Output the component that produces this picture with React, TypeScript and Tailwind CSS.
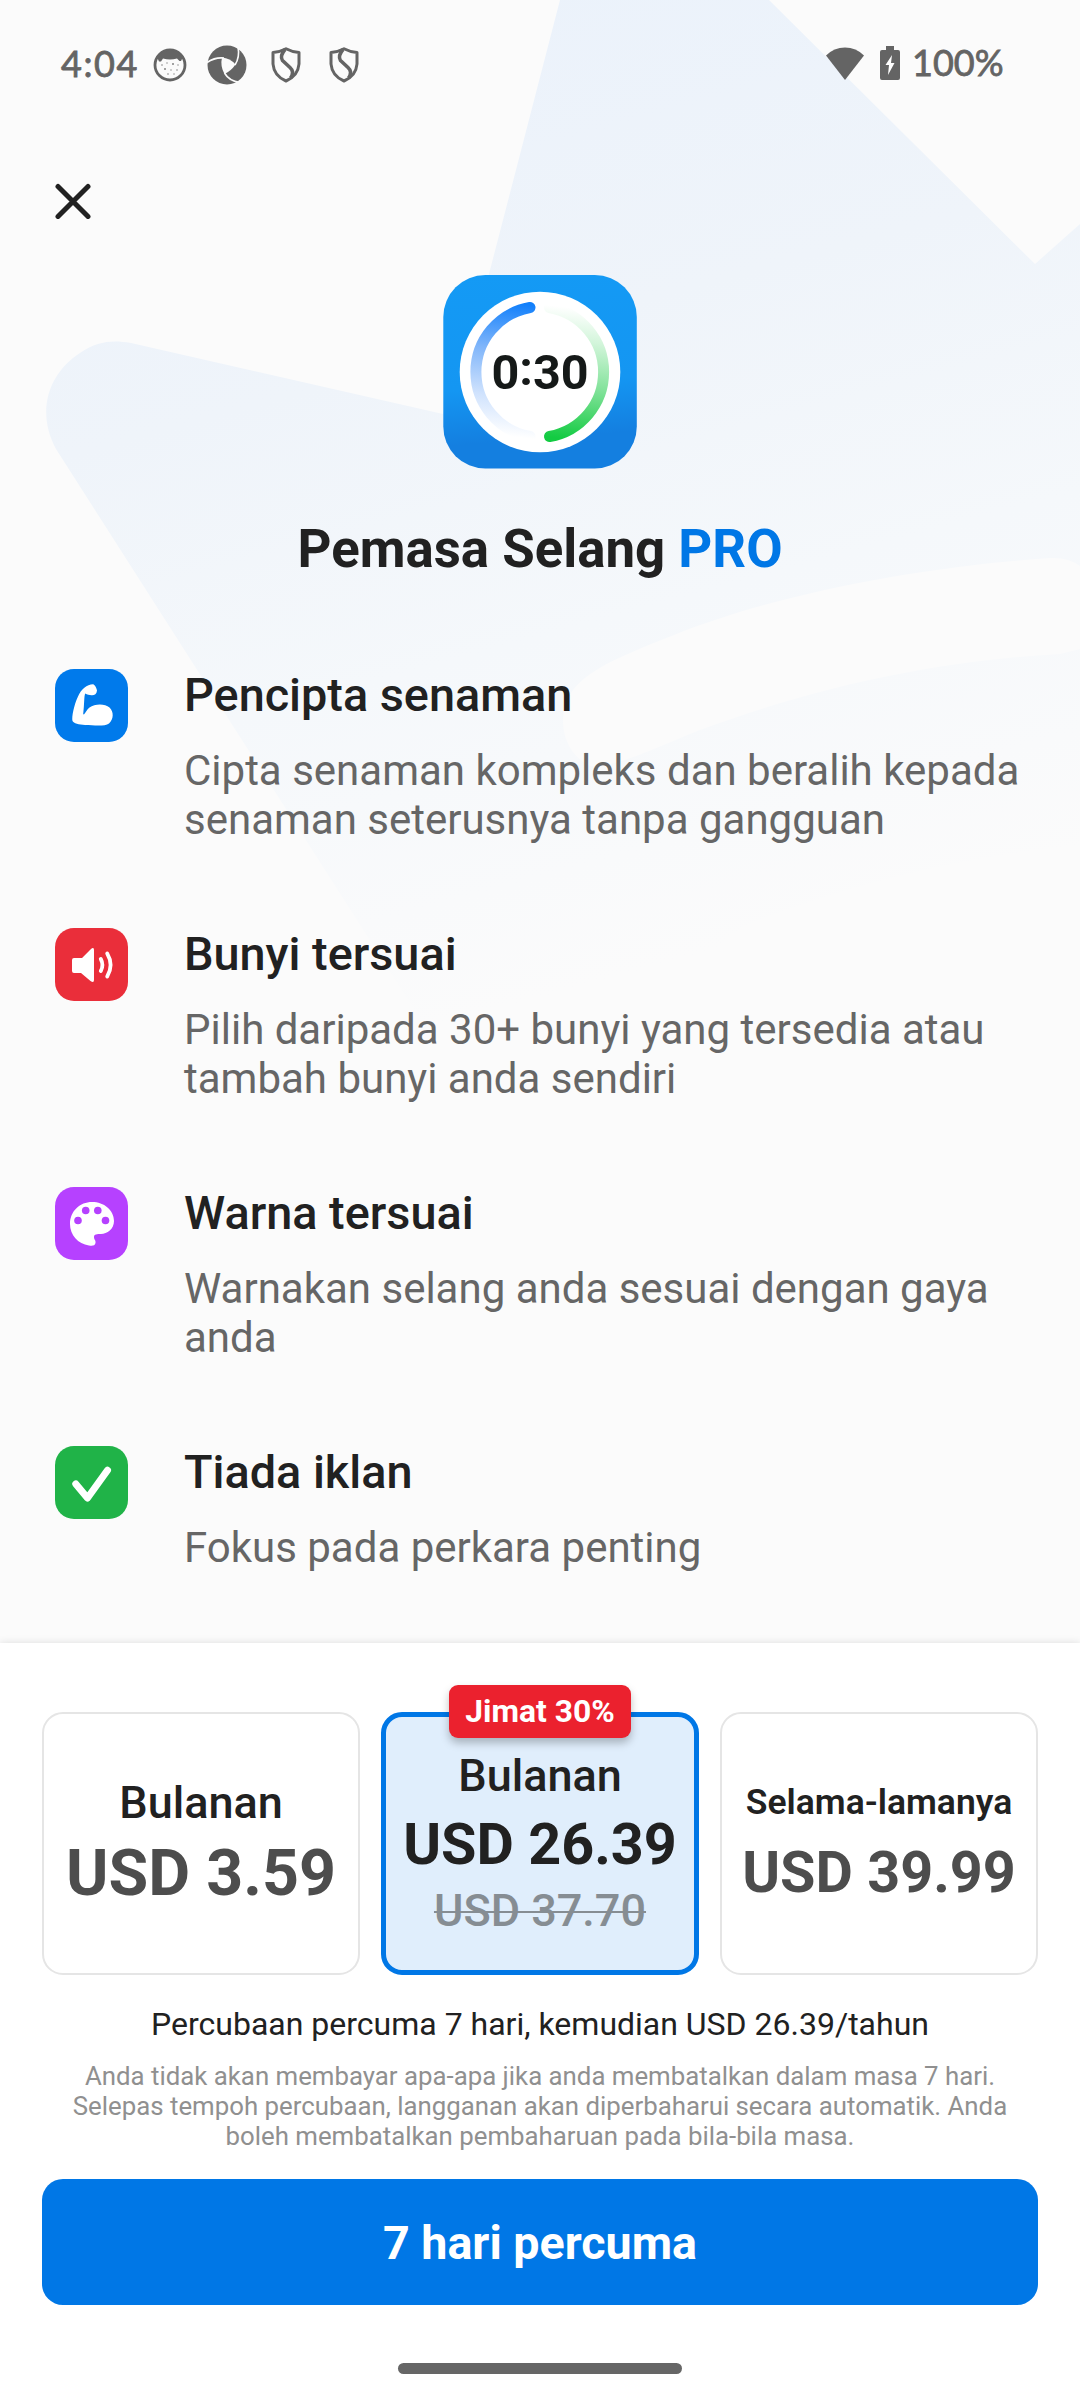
import React from "react";

const features = [
  {
    title: "Pencipta senaman",
    text: "Cipta senaman kompleks dan beralih kepada senaman seterusnya tanpa gangguan",
    color: "bg-[#007aeb]",
    icon: (
      <svg viewBox="0 0 73 73" className="size-full" fill="#fff">
        <path d="M38 15.200C39.800 15.300 41.500 19 42 21.500C41.600 25 39.500 26.500 36.500 26.300C34.500 26.200 32 25.500 30.300 24.500C29 26 29.500 35 28.200 45C29.500 47 31 41 34.500 38.500C40 34.500 50 34.500 54.500 38.500C59 43 58.800 50 54 54.500C50 57.500 40 56.500 30 56C24 55.500 18.500 54.500 17.500 52C16.500 48 19 36 23 27.500C26 20 32 15.500 38 15.200Z" />
      </svg>
    ),
  },
  {
    title: "Bunyi tersuai",
    text: "Pilih daripada 30+ bunyi yang tersedia atau tambah bunyi anda sendiri",
    color: "bg-[#ea2e3a]",
    icon: (
      <svg viewBox="0 0 73 73" className="size-full" fill="none" stroke="#fff" strokeLinecap="round">
        <path d="M19 30H27L35.500 21.500Q39 18.500 39 22V52Q39 55.500 35.500 53L26 45H19Q17 45 17 43V32Q17 30 19 30Z" fill="#fff" stroke="none" />
        <path d="M45.800 31Q49 37 45.800 43" strokeWidth="3.800" />
        <path d="M52.200 25.500Q59 37 52.200 48.500" strokeWidth="3.800" />
      </svg>
    ),
  },
  {
    title: "Warna tersuai",
    text: "Warnakan selang anda sesuai dengan gaya anda",
    color: "bg-[#b641ff]",
    icon: (
      <svg viewBox="0 0 73 73" className="size-full" fill="#fff">
        <path d="M37 15C49 15 59 23 59 34C59 42 52 47 46 47C42 47 39 47 39 50C39 53 41 53 40.500 56C40 59 37 59 34 58.500C23 57 15 48 15 37C15 24 25 15 37 15Z" />
        <g fill="#b641ff">
          <circle cx="23" cy="33.500" r="3.800" />
          <circle cx="30.700" cy="23.500" r="3.800" />
          <circle cx="42.800" cy="23.500" r="3.800" />
          <circle cx="50.500" cy="33.500" r="3.800" />
        </g>
      </svg>
    ),
  },
  {
    title: "Tiada iklan",
    text: "Fokus pada perkara penting",
    color: "bg-[#20b348]",
    icon: (
      <svg viewBox="0 0 73 73" className="size-full" fill="none" stroke="#fff" strokeWidth="7" strokeLinecap="round" strokeLinejoin="round">
        <path d="M20.800 38L32.500 52L52.500 24.300" />
      </svg>
    ),
  },
];

function Backdrop() {
  return (
    <svg viewBox="0 0 1080 1100" className="absolute left-0 top-0 h-[1100px] w-[1080px]">
      <defs>
        <linearGradient id="fade" gradientUnits="userSpaceOnUse" x1="420" y1="0" x2="680" y2="960">
          <stop offset="0" stopColor="#ebf2fb" />
          <stop offset="0.350" stopColor="#eff4fa" />
          <stop offset="0.650" stopColor="#f5f8fb" />
          <stop offset="1" stopColor="#fbfbfb" />
        </linearGradient>
      </defs>
      <path
        fill="url(#fade)"
        d="M560 0H769L1035 264L1080 224V566Q1068 557 1050 558C930 566 780 592 674 635C600 664 564 680 563 720C563 742 574 758 590 766C615 768 650 750 700 730C830 682 950 660 1060 654L1080 649V845C950 858 830 890 740 928L600 1050H440L56 449C35 410 50 372 80 353C98 341 112 340 131 343L443 414L489 274Z"
      />
    </svg>
  );
}

function Shield() {
  return (
    <svg viewBox="0 0 30 36" className="h-9 w-[30px]" fill="none" stroke="#646464" strokeWidth="3" strokeLinejoin="round">
      <path d="M15 1.800Q21 5 28 5.500V17Q27 29 15 34Q3 29 2 17V5.500Q9 5 15 1.800Z" />
      <path d="M14 2.500Q8.500 9 11.500 13.500L19 20.500Q24 25 19.500 31" strokeWidth="3.600" />
    </svg>
  );
}

function StatusBar() {
  return (
    <div className="relative flex h-[128px] items-center pl-[61px] pr-[74px] pt-px text-[#646464]">
      <span className="mb-1 w-[79px] whitespace-nowrap font-[Lato,sans-serif] text-[36px] leading-none tracking-[1.6px] [-webkit-text-stroke:0.8px_#646464]">
        4:04
      </span>
      <svg viewBox="0 0 34 34" className="ml-[13px] size-[34px]">
        <circle cx="17" cy="17" r="15" fill="#fbfbfb" stroke="#646464" strokeWidth="2.800" />
        <path d="M4 9Q9 2.500 17 2.500T30 9L28 13H26.500L24 10.500Q17 12.500 10 10.500L8 13.500H6Z" fill="#646464" />
        <g fill="#848484">
          <circle cx="9" cy="17" r="0.800" /><circle cx="14" cy="15" r="0.700" /><circle cx="20" cy="16" r="1" />
          <circle cx="25" cy="17" r="0.700" /><circle cx="12" cy="21" r="1" /><circle cx="18" cy="22" r="0.700" />
          <circle cx="24" cy="22" r="0.800" /><circle cx="15" cy="26" r="0.800" /><circle cx="21" cy="26" r="0.700" />
        </g>
      </svg>
      <svg viewBox="0 0 40 40" className="ml-5 size-10">
        <circle cx="20" cy="20" r="19.500" fill="#646464" />
        <path d="M15 12.500Q23 13 28.500 19.500Q24 26 17.500 29Q13 21 15 12.500Z" fill="#fbfbfb" />
        <g fill="none" stroke="#fbfbfb" strokeWidth="1.600">
          <path d="M17 13Q8 12 0 17.500" />
          <path d="M28 20Q33 12 31 2" />
          <path d="M17.500 28Q22 36 33 37.500" />
        </g>
      </svg>
      <div className="ml-6 flex gap-7">
        <Shield />
        <Shield />
      </div>
      <svg viewBox="0 0 38 33" className="mb-[3px] ml-auto h-[33px] w-[38px]" fill="#646464">
        <path d="M0 8.500Q8 0.500 19 0.500T38 8.500L19 33Z" />
      </svg>
      <svg viewBox="0 0 20 34" className="mb-[3px] ml-4 h-[34px] w-5">
        <path d="M6 0H14V4H18Q20 4 20 6V32Q20 34 18 34H2Q0 34 0 32V6Q0 4 2 4H6Z" fill="#646464" />
        <path d="M12 9L5.500 19H9L8 29L14.500 17H11Z" fill="#fff" />
      </svg>
      <span className="mb-[5px] ml-3 w-[94px] whitespace-nowrap font-[Lato,sans-serif] text-[36px] leading-none [-webkit-text-stroke:0.8px_#646464]">
        100%
      </span>
    </div>
  );
}

function AppIcon() {
  return (
    <svg viewBox="0 0 220 220" className="size-[220px]">
      <defs>
        <linearGradient id="tile" x1="0" y1="0" x2="0.080" y2="1">
          <stop offset="0" stopColor="#149af5" />
          <stop offset="0.600" stopColor="#1496f2" />
          <stop offset="0.880" stopColor="#147fe0" />
        </linearGradient>
        <linearGradient id="blueArc" gradientUnits="userSpaceOnUse" x1="100" y1="40" x2="85" y2="172">
          <stop offset="0" stopColor="#1280fb" />
          <stop offset="0.350" stopColor="#7fb5fa" />
          <stop offset="0.700" stopColor="#cfe2fd" />
          <stop offset="1" stopColor="#ffffff" />
        </linearGradient>
        <linearGradient id="greenArc" gradientUnits="userSpaceOnUse" x1="120" y1="172" x2="135" y2="42">
          <stop offset="0" stopColor="#13cb42" />
          <stop offset="0.400" stopColor="#82e29a" />
          <stop offset="0.750" stopColor="#d2f5da" />
          <stop offset="1" stopColor="#ffffff" />
        </linearGradient>
      </defs>
      <rect x="13.300" y="10" width="193.500" height="193.500" rx="42" fill="url(#tile)" />
      <circle cx="110" cy="107" r="80.300" fill="#fff" />
      <g fill="none" strokeWidth="11" strokeLinecap="round">
        <path d="M100 42.500A65.500 65.500 0 0 0 100 171.500" stroke="url(#blueArc)" />
        <path d="M119.500 171.500A65.500 65.500 0 0 0 119.500 42.500" stroke="url(#greenArc)" />
      </g>
      <text x="110" y="124" textAnchor="middle" className="font-[Roboto,sans-serif] text-[48.500px] font-bold" fill="#151918">
        0<tspan dy="-4">:</tspan><tspan dy="4">30</tspan>
      </text>
    </svg>
  );
}

export default function App() {
  return (
    <main className="relative flex h-[2400px] w-[1080px] flex-col overflow-hidden bg-[#fbfbfb] font-[Roboto,sans-serif] text-[#212121]">
      <Backdrop />
      <StatusBar />
      <section className="relative flex h-[1515px] flex-col">
        <button aria-label="Tutup" className="ml-[55px] mt-[55px] size-9">
          <svg viewBox="0 0 36 36" className="size-9" stroke="#212121" strokeWidth="5" strokeLinecap="round">
            <path d="M3 3.500L33 33.500M33 3.500L3 33.500" />
          </svg>
        </button>
        <div className="mt-[46px] flex flex-col items-center">
          <AppIcon />
          <h1 className="mt-8 whitespace-nowrap text-[52.8px] font-bold leading-[64px]">
            Pemasa Selang <span className="text-[#0077e6]">PRO</span>
          </h1>
        </div>
        <ul className="mt-[88px] flex flex-col px-[55px]">
          {features.map((f) => (
            <li key={f.title} className="flex h-[259px] gap-[56px]">
              <div className={`size-[73px] shrink-0 overflow-hidden rounded-[19px] ${f.color}`}>{f.icon}</div>
              <div className="w-[850px]">
                <h2 className="text-[46.8px] font-medium leading-[52px]">{f.title}</h2>
                <p className="mt-[25px] text-[42px] leading-[49px] text-[#666666]">{f.text}</p>
              </div>
            </li>
          ))}
        </ul>
      </section>
      <section className="relative flex h-[757px] flex-col items-center bg-white px-[42px] shadow-[0_0_8px_rgba(0,0,0,0.12)]">
        <div className="mt-[69px] grid w-full grid-cols-3 gap-[21px]">
          <div className="flex h-[263px] flex-col items-center justify-center rounded-[21px] border-[2.5px] border-[#e5e5e5]">
            <h3 className="text-[45px] font-medium leading-[53px]">Bulanan</h3>
            <p className="mt-1.5 whitespace-nowrap text-[64.5px] font-bold leading-[76px] text-[#4d4d4d]">USD 3.59</p>
          </div>
          <div className="relative flex h-[263px] flex-col items-center rounded-[21px] border-[5px] border-[#0077e6] bg-[#e0eefc] pt-8">
            <span className="absolute -top-8 flex h-[53px] w-[182px] items-center justify-center whitespace-nowrap rounded-[9px] bg-[#eb212e] text-[31.8px] font-bold text-white shadow-[0_5px_9px_rgba(0,0,0,0.25)]">
              Jimat 30%
            </span>
            <h3 className="text-[45px] font-medium leading-[53px]">Bulanan</h3>
            <p className="mt-[5px] whitespace-nowrap text-[57.5px] font-bold leading-[76px]">USD 26.39</p>
            <p className="mt-px whitespace-nowrap text-[45px] font-medium leading-[53px] text-[#868d93] line-through decoration-2">
              USD 37.70
            </p>
          </div>
          <div className="flex h-[263px] flex-col items-center justify-center rounded-[21px] border-[2.5px] border-[#e5e5e5]">
            <h3 className="text-[35.5px] font-semibold leading-[53px]">Selama-lamanya</h3>
            <p className="mt-1.5 whitespace-nowrap text-[57.5px] font-bold leading-[76px] text-[#4d4d4d]">USD 39.99</p>
          </div>
        </div>
        <p className="mt-[30px] whitespace-nowrap text-[32px] leading-[38px]">
          Percubaan percuma 7 hari, kemudian USD 26.39/tahun
        </p>
        <p className="mt-[18px] text-center text-[25.8px] leading-[30px] text-[#909090]">
          Anda tidak akan membayar apa-apa jika anda membatalkan dalam masa 7 hari.
          <br />
          Selepas tempoh percubaan, langganan akan diperbaharui secara automatik. Anda
          <br />
          boleh membatalkan pembaharuan pada bila-bila masa.
        </p>
        <button className="mt-7 h-[126px] w-full rounded-[21px] bg-[#0077e6] pt-1 text-[46.6px] font-bold text-white">
          7 hari percuma
        </button>
        <div className="mt-[58px] h-[11px] w-[284px] rounded-full bg-[#666666]" />
      </section>
    </main>
  );
}
